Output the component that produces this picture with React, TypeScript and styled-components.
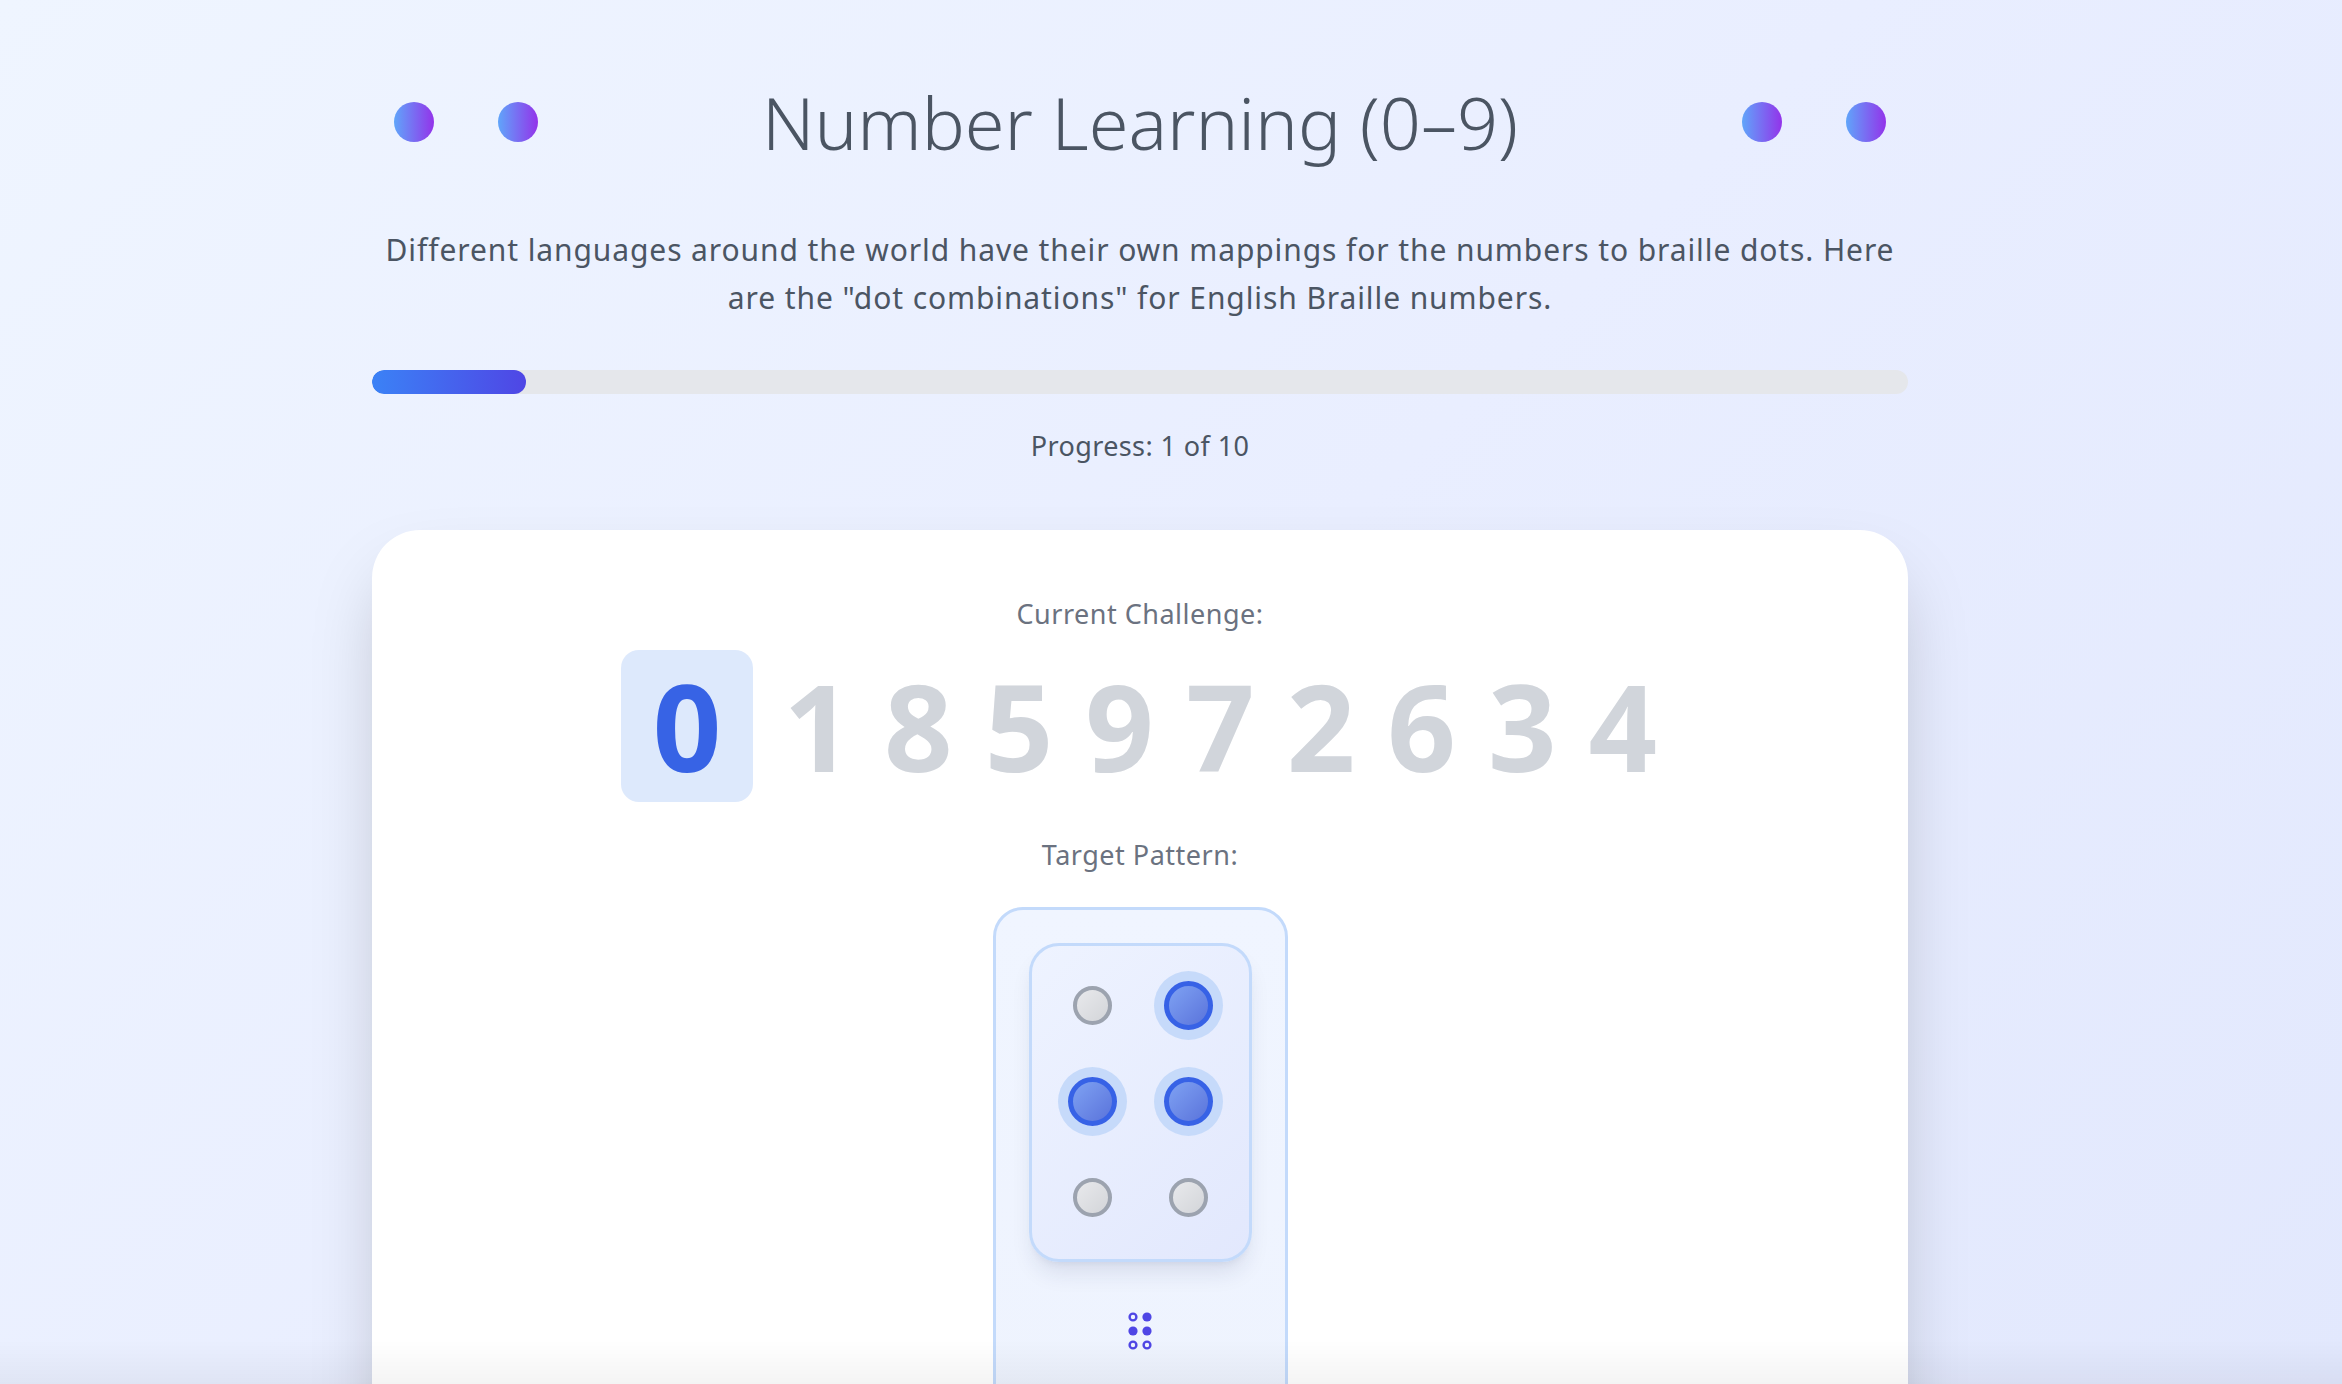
import styled, { createGlobalStyle } from "styled-components";

const GlobalStyle = createGlobalStyle`
  html, body {
    margin: 0;
    padding: 0;
  }
  body {
    min-height: 100vh;
    font-family: "Noto Sans", "Open Sans", sans-serif;
    background: linear-gradient(135deg, #eff5ff 0%, #e9eeff 50%, #e2e8fd 100%);
    background-attachment: fixed;
  }
`;

const sequence = [0, 1, 8, 5, 9, 7, 2, 6, 3, 4];
// braille for 0 ("j"): dots 2, 4, 5 -> grid order 1 4 / 2 5 / 3 6
const pattern = [false, true, true, true, false, false];

const BrailleGlyph = ({ dots }: { dots: boolean[] }) => {
  const xs = [5, 19];
  const ys = [5, 19, 33];
  return (
    <Glyph width="24" height="38" viewBox="0 0 24 38">
      {dots.map((on, i) => {
        const cx = xs[i % 2];
        const cy = ys[Math.floor(i / 2)];
        return on ? (
          <circle key={i} cx={cx} cy={cy} r="4.6" fill="#4f46e5" />
        ) : (
          <circle key={i} cx={cx} cy={cy} r="3.4" fill="none" stroke="#4f46e5" strokeWidth="2.4" />
        );
      })}
    </Glyph>
  );
};

const App = () => {
  const current = 0;
  const total = 10;
  return (
    <>
      <GlobalStyle />
      <Page>
        <Container>
          <Header>
            <DotGroup>
              <Orb />
              <Orb />
            </DotGroup>
            <Title>Number Learning (0–9)</Title>
            <DotGroup>
              <Orb />
              <Orb />
            </DotGroup>
          </Header>

          <Description>
            Different languages around the world have their own mappings for the numbers to braille
            dots. Here are the "dot combinations" for English Braille numbers.
          </Description>

          <Track>
            <Fill style={{ width: `${((current + 1) / total) * 100}%` }} />
          </Track>
          <ProgressText>
            Progress: {current + 1} of {total}
          </ProgressText>

          <Card>
            <Label>Current Challenge:</Label>
            <DigitRow>
              {sequence.map((n, i) => (
                <Digit key={i} $active={i === current}>
                  {n}
                </Digit>
              ))}
            </DigitRow>

            <Label $spaced>Target Pattern:</Label>
            <PatternCard>
              <Cell>
                {pattern.map((on, i) => (
                  <DotSlot key={i}>
                    <BrailleDot $on={on} />
                  </DotSlot>
                ))}
              </Cell>
              <BrailleGlyph dots={pattern} />
            </PatternCard>
          </Card>
        </Container>
      </Page>
      <BottomFade />
    </>
  );
};
export default App;

const Page = styled.main`
  display: flex;
  justify-content: center;
  padding: 86px 62px 0 0;
`;

const Container = styled.div`
  width: 100%;
  max-width: 1536px;
  display: flex;
  flex-direction: column;
`;

const Header = styled.header`
  display: flex;
  align-items: center;
  justify-content: space-between;
  padding: 0 22px;
`;

const DotGroup = styled.div`
  display: flex;
  gap: 64px;
`;

const Orb = styled.span`
  width: 40px;
  height: 40px;
  border-radius: 50%;
  background: linear-gradient(90deg, #60a5fa, #9333ea);
`;

const Title = styled.h1`
  margin: 0;
  font-size: 72px;
  font-weight: 300;
  line-height: 1;
  color: #4b5563;
`;

const Description = styled.p`
  margin: 68px 0 0;
  font-size: 30px;
  line-height: 48px;
  letter-spacing: 0.9px;
  text-align: center;
  color: #4b5563;
`;

const Track = styled.div`
  margin-top: 48px;
  height: 24px;
  border-radius: 12px;
  background: #e5e7eb;
  overflow: hidden;
`;

const Fill = styled.div`
  height: 100%;
  border-radius: 12px;
  background: linear-gradient(90deg, #3b82f6, #4f46e5);
`;

const ProgressText = styled.p`
  margin: 32px 0 0;
  font-size: 27px;
  line-height: 40.5px;
  letter-spacing: 0.4px;
  text-align: center;
  color: #4b5563;
`;

const Card = styled.section`
  margin-top: 63px;
  padding: 64px 60px 0;
  background: #ffffff;
  border-radius: 48px;
  box-shadow: 0 37px 75px -18px rgba(0, 0, 0, 0.25);
  display: flex;
  flex-direction: column;
  align-items: center;
`;

const Label = styled.p<{ $spaced?: boolean }>`
  margin: ${(p) => (p.$spaced ? "33px" : "0")} 0 0;
  font-size: 27px;
  line-height: 40.5px;
  letter-spacing: 0.5px;
  color: #6b7280;
`;

const DigitRow = styled.div`
  margin-top: 16px;
  display: flex;
  gap: 28px;
`;

const Digit = styled.span<{ $active: boolean }>`
  padding: 16px ${(p) => (p.$active ? "32px" : "2px")};
  font-size: 120px;
  font-weight: 700;
  line-height: 1;
  border-radius: 18px;
  color: ${(p) => (p.$active ? "#3763e5" : "#d1d5db")};
  background: ${(p) => (p.$active ? "#dde9fc" : "transparent")};
`;

const PatternCard = styled.div`
  margin-top: 31px;
  padding: 33px 33px 140px;
  border: 3px solid #c3dafb;
  border-radius: 30px;
  background: linear-gradient(180deg, #f0f5ff, #eef3fe);
  display: flex;
  flex-direction: column;
  align-items: center;
`;

const Cell = styled.div`
  padding: 36px 36px 37px 37px;
  border: 3px solid #c3dafb;
  border-radius: 30px;
  background: linear-gradient(135deg, #eef3ff, #e2e8fd);
  box-shadow: 0 15px 22px -4px rgba(30, 41, 90, 0.1), 0 6px 9px -6px rgba(30, 41, 90, 0.1);
  display: grid;
  grid-template-columns: repeat(2, 48px);
  grid-auto-rows: 48px;
  gap: 48px;
`;

const DotSlot = styled.div`
  display: flex;
  align-items: center;
  justify-content: center;
`;

const BrailleDot = styled.span<{ $on: boolean }>`
  box-sizing: border-box;
  flex: none;
  border-radius: 50%;
  width: ${(p) => (p.$on ? "49px" : "39px")};
  height: ${(p) => (p.$on ? "49px" : "39px")};
  border: ${(p) => (p.$on ? "5px solid #3762e6" : "4px solid #9ca3af")};
  background: ${(p) =>
    p.$on
      ? "linear-gradient(135deg, #7fa2f3, #5a73db)"
      : "linear-gradient(135deg, #e8e9ec, #d3d5d9)"};
  box-shadow: ${(p) => (p.$on ? "0 0 0 10px #c6dafa" : "none")};
`;

const Glyph = styled.svg`
  margin-top: 50px;
  display: block;
`;

const BottomFade = styled.div`
  position: fixed;
  left: 0;
  right: 0;
  bottom: 0;
  height: 44px;
  pointer-events: none;
  background: linear-gradient(180deg, rgba(0, 0, 0, 0), rgba(0, 0, 0, 0.045));
`;
